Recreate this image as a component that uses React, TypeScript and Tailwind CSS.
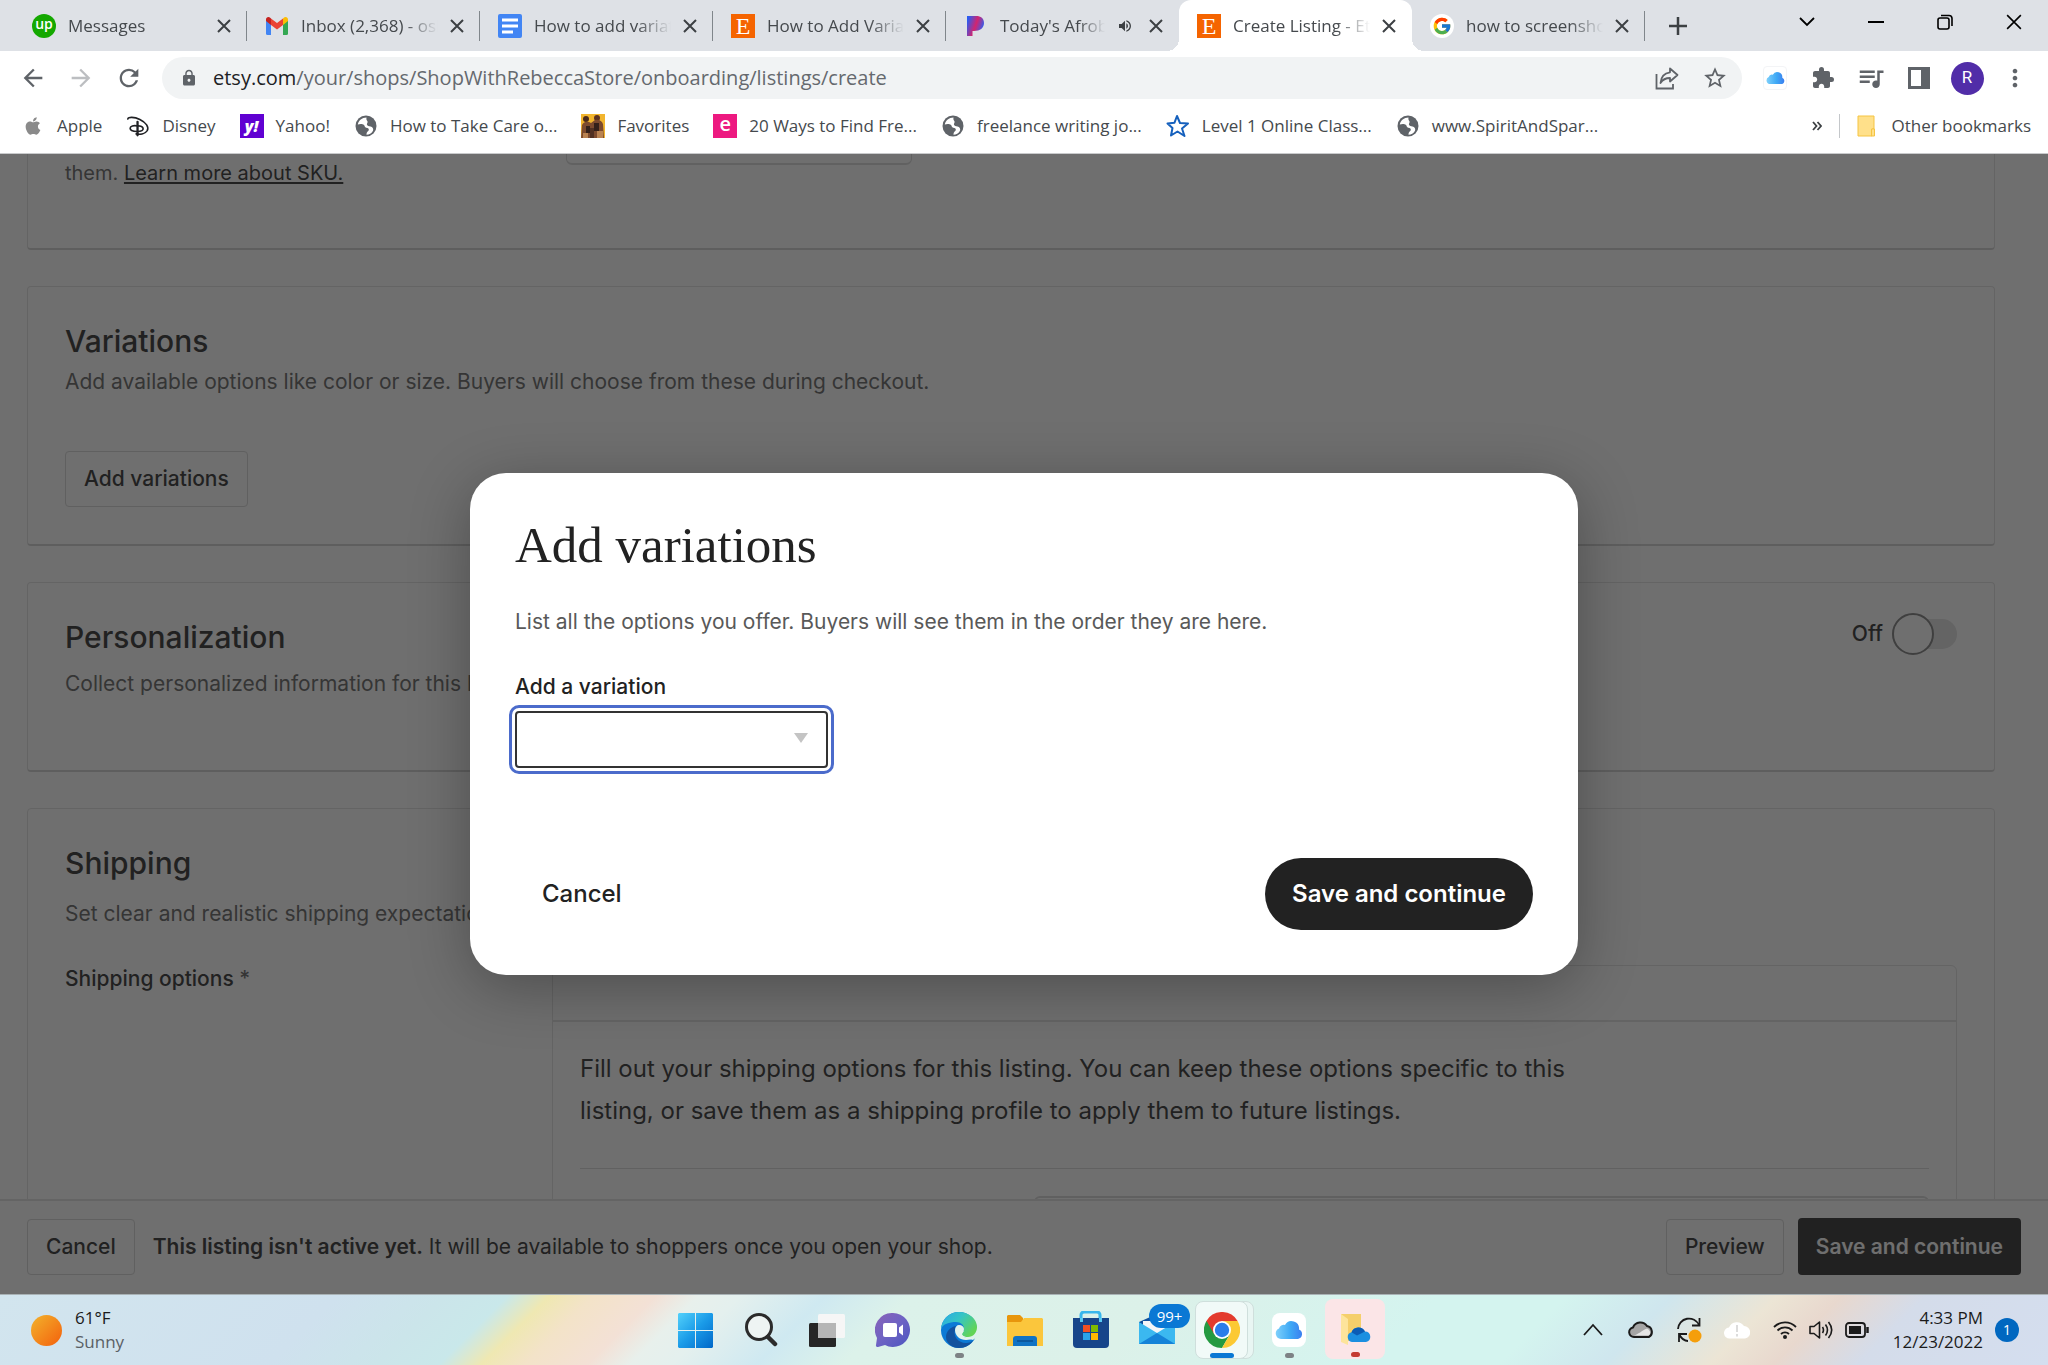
import type { ReactNode } from 'react'
import { FaApple } from 'react-icons/fa'
import { FcGoogle } from 'react-icons/fc'
import {
  MdArrowBack,
  MdArrowForward,
  MdExtension,
  MdLock,
  MdMoreVert,
  MdQueueMusic,
  MdRefresh,
  MdStarBorder,
  MdVolumeUp,
} from 'react-icons/md'

/* ---------- favicons ---------- */

const UpworkIcon = () => (
  <span className="flex size-6 items-center justify-center rounded-full bg-[#14a800] pb-1 text-sm leading-none font-semibold text-white">
    up
  </span>
)

const GmailIcon = () => (
  <svg viewBox="0 0 24 24" className="size-6">
    <path d="M1 6v13.5A1.5 1.5 0 0 0 2.500 21H6V10z" fill="#4285f4" />
    <path d="M23 6v13.5a1.500 1.500 0 0 1-1.500 1.500H18V10z" fill="#34a853" />
    <path d="M18 4.500V11l5-4V5.500C23 3 20.200 2.200 18.500 4z" fill="#fbbc04" />
    <path d="M1 5.500V7l5 4V4.500L5.500 4C3.800 2.200 1 3 1 5.500z" fill="#c5221f" />
    <path d="M6 4.500 12 9l6-4.500V11l-6 4.500L6 11z" fill="#ea4335" />
  </svg>
)

const DocsIcon = () => (
  <svg viewBox="0 0 24 24" className="size-6">
    <rect width="24" height="24" rx="2" fill="#4285f4" />
    <path d="M4 6h16M4 12h16M4 18h11" stroke="#fff" strokeWidth="3" />
  </svg>
)

const EtsyIcon = () => (
  <span className="flex size-6 items-center justify-center bg-[#f56400] font-['Liberation_Serif',serif] text-2xl leading-6 text-white">
    E
  </span>
)

const PandoraIcon = () => (
  <svg viewBox="0 0 24 24" className="size-6">
    <defs>
      <linearGradient id="pandora" x1="0" y1="0" x2="1" y2="0.4">
        <stop offset="0.1" stopColor="#2b5cf0" />
        <stop offset="0.6" stopColor="#d3246e" />
        <stop offset="1" stopColor="#3a5be8" />
      </linearGradient>
    </defs>
    <path d="M3 2h9c5 0 8 2.600 8 7 0 5-4 8-10 8H8.500v5H3z" fill="url(#pandora)" />
  </svg>
)

const GlobeIcon = () => (
  <svg viewBox="0 0 22 22" className="size-[22px]">
    <circle cx="11" cy="11" r="10.500" fill="#5f6368" />
    <path
      d="M11.500 2.500c-4.500 0-8 3-8.700 7 2-.8 4.700-.9 6.200.5 1 1 .6 2.500 2.200 2.700 2 .3 3 1 2.500 2.600-.4 1.200-1.700 1.500-2 2.700-.2.700-.2 1.200-.2 1.700 2.500 0 5.300-1.500 6.500-4 .8-2-.5-3.700-2.500-4.200-1.700-.5-3-.3-3.500-1.700-.4-1.300.8-1.800.6-3C12.400 5.500 11 5.300 11.500 2.500z"
      fill="#fff"
    />
  </svg>
)

const DisneyIcon = () => (
  <svg viewBox="0 0 26 24" className="h-6 w-[26px]" fill="none" stroke="#202124" strokeLinecap="round">
    <path d="M2 4.500C2 2 9 2 15 5c7 3.500 10 8 8 12-2 3-7 4.500-12 3.500" strokeWidth="1.800" />
    <path d="M12.500 7.500V22" strokeWidth="2.500" />
    <path d="M13 12c-5-1-8.500 0-8.500 2.500S8 18 12 18c5 0 7-1.500 6.500-3.500S15 11.500 12 12" strokeWidth="1.800" />
  </svg>
)

const YahooIcon = () => (
  <span className="flex size-6 items-center justify-center bg-[#6001d2] text-base leading-none font-extrabold text-white italic">
    y!
  </span>
)

const FavoritesIcon = () => (
  <svg viewBox="0 0 24 24" className="size-6">
    <rect width="24" height="24" fill="#f2b52e" />
    <circle cx="5" cy="5" r="3" fill="#4a2a1c" />
    <circle cx="16" cy="4" r="3" fill="#5b3222" />
    <path d="M1 11c2-4 6-4 9-2l4-3c4-1 7 1 8 4l1 14H0z" fill="#7c4a2e" />
    <path d="M5 12h4v7H5zM13 9h5v8h-5z" fill="#33201a" />
    <path d="M2 19h5v5H2zM16 17h6v7h-6z" fill="#b98352" />
    <path d="M9 14h4v10H9z" fill="#513022" />
  </svg>
)

const PinkEIcon = () => (
  <span className="flex size-6 items-center justify-center bg-[#ed1980] pb-1 text-xl leading-none font-semibold text-white">
    e
  </span>
)

const BlueStarIcon = () => (
  <svg viewBox="0 0 24 24" className="size-6" fill="none" stroke="#1560bd" strokeWidth="2" strokeLinejoin="round">
    <path d="m11 2 3 7 8 .5-6 5L18.500 22 11.500 17.500 5 21.500 6.500 14 1.500 9.500l7-.8z" />
  </svg>
)

const CloudShape = ({ className, id }: { className: string; id: string }) => (
  <svg viewBox="0 0 28 18" className={className}>
    <defs>
      <linearGradient id={id} x1="0" x2="1">
        <stop offset="0" stopColor="#7ed0fb" />
        <stop offset="0.550" stopColor="#3fa9f5" />
        <stop offset="1" stopColor="#3b7ff0" />
      </linearGradient>
    </defs>
    <path
      d="M6 18a5.500 5.500 0 0 1-2-10.500A5 5 0 0 1 10 4a7.500 7.500 0 0 1 14 4.500A5 5 0 0 1 23 18z"
      fill={`url(#${id})`}
    />
  </svg>
)

const CloseGlyph = ({ size = 'size-3.5', width = 2 }: { size?: string; width?: number }) => (
  <svg viewBox="0 0 14 14" className={size} stroke="currentColor" strokeWidth={width}>
    <path d="m1 1 12 12M13 1 1 13" />
  </svg>
)

/* ---------- browser chrome ---------- */

const tabs: { title: string; icon: ReactNode; active?: boolean; audio?: boolean; line?: boolean }[] = [
  { title: 'Messages', icon: <UpworkIcon />, line: true },
  { title: 'Inbox (2,368) - oshunrebecca', icon: <GmailIcon />, line: true },
  { title: 'How to add variations', icon: <DocsIcon />, line: true },
  { title: 'How to Add Variations', icon: <EtsyIcon />, line: true },
  { title: "Today's Afrobeats", icon: <PandoraIcon />, audio: true },
  { title: 'Create Listing - Etsy', icon: <EtsyIcon />, active: true },
  {
    title: 'how to screenshot',
    icon: (
      <span className="flex size-6 items-center justify-center rounded-full bg-white">
        <FcGoogle className="size-5" />
      </span>
    ),
    line: true,
  },
]

const bookmarks: { title: string; icon: ReactNode }[] = [
  { title: 'Apple', icon: <FaApple className="size-5 text-[#8a8a8a]" /> },
  { title: 'Disney', icon: <DisneyIcon /> },
  { title: 'Yahoo!', icon: <YahooIcon /> },
  { title: 'How to Take Care o...', icon: <GlobeIcon /> },
  { title: 'Favorites', icon: <FavoritesIcon /> },
  { title: '20 Ways to Find Fre...', icon: <PinkEIcon /> },
  { title: 'freelance writing jo...', icon: <GlobeIcon /> },
  { title: 'Level 1 Online Class...', icon: <BlueStarIcon /> },
  { title: 'www.SpiritAndSpar...', icon: <GlobeIcon /> },
]

function TabStrip() {
  return (
    <div className="flex h-[51px] bg-[#dee1e6] pl-[14px]">
      {tabs.map((tab) => (
        <div
          key={tab.title}
          className={
            tab.active
              ? "relative flex w-[233px] items-center rounded-t-xl bg-white pr-4 pl-[18px] before:absolute before:bottom-0 before:-left-3 before:size-3 before:bg-[radial-gradient(circle_at_0_0,transparent_12px,#fff_12px)] before:content-[''] after:absolute after:-right-3 after:bottom-0 after:size-3 after:bg-[radial-gradient(circle_at_100%_0,transparent_12px,#fff_12px)] after:content-['']"
              : 'relative flex w-[233px] items-center pr-4 pl-[18px]'
          }
        >
          <span className="shrink-0">{tab.icon}</span>
          <span className="ml-3 flex-1 overflow-hidden text-[17px] whitespace-nowrap text-[#45494d] [mask-image:linear-gradient(to_right,black_75%,transparent)]">
            {tab.title}
          </span>
          {tab.audio && <MdVolumeUp className="mr-1 ml-3 size-4 shrink-0 text-[#3c4043]" />}
          <button aria-label="Close tab" className="ml-3 shrink-0 text-[#3c4043]">
            <CloseGlyph />
          </button>
          {tab.line && <span className="absolute top-[11px] right-0 h-[30px] w-px bg-[#80868b]" />}
        </div>
      ))}
      <button aria-label="New tab" className="flex w-[66px] items-center justify-center text-[#3c4043]">
        <svg viewBox="0 0 18 18" className="size-[18px]" stroke="currentColor" strokeWidth="2.500">
          <path d="M9 0v18M0 9h18" />
        </svg>
      </button>
      <div className="ml-auto flex h-11 text-black">
        <button aria-label="Search tabs" className="flex w-[69px] items-center justify-center">
          <svg viewBox="0 0 16 16" className="size-4" fill="none" stroke="currentColor" strokeWidth="1.800">
            <path d="m1 4 7 7 7-7" />
          </svg>
        </button>
        <button aria-label="Minimize" className="flex w-[69px] items-center justify-center">
          <span className="h-[2px] w-4 bg-black" />
        </button>
        <button aria-label="Restore" className="flex w-[69px] items-center justify-center">
          <svg viewBox="0 0 16 16" className="size-4" fill="none" stroke="currentColor" strokeWidth="1.600">
            <rect x="1" y="4" width="11" height="11" rx="2" />
            <path d="M4 1.500h8A3 3 0 0 1 15 4.500V12" />
          </svg>
        </button>
        <button aria-label="Close" className="flex w-[69px] items-center justify-center">
          <CloseGlyph size="size-4" width={1.4} />
        </button>
      </div>
    </div>
  )
}

function Toolbar() {
  return (
    <div className="flex h-[54px] items-center gap-[9px] bg-white px-[9px] text-[#5f6368]">
      <div className="flex">
        <button aria-label="Back" className="flex w-12 justify-center">
          <MdArrowBack className="size-7" />
        </button>
        <button aria-label="Forward" className="flex w-12 justify-center text-[#bcbec1]">
          <MdArrowForward className="size-7" />
        </button>
        <button aria-label="Reload" className="flex w-12 justify-center">
          <MdRefresh className="size-7" />
        </button>
      </div>
      <div className="flex h-[42px] flex-1 items-center rounded-full bg-[#f1f3f4] pr-[3px] pl-[18px]">
        <MdLock className="size-[18px]" />
        <span className="ml-[15px] flex-1 text-[20px] whitespace-nowrap text-[#65696e]">
          <span className="text-[#202124]">etsy.com</span>/your/shops/ShopWithRebeccaStore/onboarding/listings/create
        </span>
        <button aria-label="Share" className="flex w-12 justify-center">
          <svg viewBox="0 0 24 24" className="size-6" fill="none" stroke="currentColor" strokeWidth="1.800">
            <path d="M1.500 8v14.500H18V18" />
            <path d="M15 2.500 22.500 9 15 15.500V12c-4 0-7 1-9.500 5C6 11 9.500 7 15 6.300z" strokeLinejoin="round" />
          </svg>
        </button>
        <button aria-label="Bookmark this tab" className="flex w-12 justify-center">
          <MdStarBorder className="size-[26px]" />
        </button>
      </div>
      <div className="flex items-center">
        <button aria-label="iCloud" className="flex w-12 justify-center">
          <span className="flex size-6 items-center justify-center rounded border border-gray-100 bg-white">
            <CloudShape className="w-[19px]" id="cloud-ext" />
          </span>
        </button>
        <button aria-label="Extensions" className="flex w-12 justify-center">
          <MdExtension className="size-6" />
        </button>
        <button aria-label="Media" className="flex w-12 justify-center">
          <MdQueueMusic className="size-[30px]" />
        </button>
        <button aria-label="Side panel" className="flex w-12 justify-center">
          <svg viewBox="0 0 22 22" className="size-[22px]">
            <path d="M0 0h22v22H0zM3 3v16h10V3z" fill="currentColor" fillRule="evenodd" />
          </svg>
        </button>
        <button className="flex w-12 justify-center" aria-label="Profile">
          <span className="flex size-[33px] items-center justify-center rounded-full bg-[#512da8] font-[Roboto,sans-serif] text-[17px] text-white">
            R
          </span>
        </button>
        <button aria-label="Menu" className="flex w-12 justify-center">
          <MdMoreVert className="size-7" />
        </button>
      </div>
    </div>
  )
}

function BookmarksBar() {
  return (
    <div className="flex h-[49px] items-center border-b border-[#c9cacc] bg-white pr-[17px] pb-[7px] pl-[21px] text-[17px] text-[#45494d]">
      <div className="flex gap-6">
        {bookmarks.map((item) => (
          <a key={item.title} href="#" className="flex items-center gap-3 whitespace-nowrap">
            <span className="flex w-6 justify-center">{item.icon}</span>
            {item.title}
          </a>
        ))}
      </div>
      <button aria-label="More bookmarks" className="ml-auto text-[#3c4043]">
        <svg viewBox="0 0 10 10" className="size-[10px]" fill="none" stroke="currentColor" strokeWidth="1.800">
          <path d="m1 1 3.500 4L1 9M5.500 1 9 5 5.500 9" />
        </svg>
      </button>
      <span className="mx-[17px] h-6 w-px bg-[#c4c7ca]" />
      <a href="#" className="flex items-center gap-4 whitespace-nowrap">
        <svg viewBox="0 0 18 22" className="h-[22px] w-[18px]">
          <path d="M1 1h16v13h-2v7H1z" fill="#ffe08a" stroke="#f5c443" />
          <path d="M14.500 14h3v7h-3z" fill="#ffe08a" stroke="#f5c443" />
        </svg>
        Other bookmarks
      </a>
    </div>
  )
}

/* ---------- listing form ---------- */

function ListingForm() {
  return (
    <div className="min-h-0 flex-1 overflow-hidden pr-[53px] pl-[27px]">
      <section className="h-[96px] rounded-b border border-t-0 border-b-2 border-[#dfdfdf] border-b-[#cfcfcf] px-[37px]">
        <div className="flex">
          <p className="-mt-[26px] w-[501px] text-[20px] leading-[30px] text-[#595959]">
            SKUs are for your use only—buyers won't see
            <br />
            them.{' '}
            <a href="#" className="text-[#222] underline underline-offset-2">
              Learn more about SKU.
            </a>
          </p>
          <input
            aria-label="SKU"
            className="-mt-12 h-[59px] w-[346px] rounded-md border border-b-2 border-[#d8d8d8]"
          />
        </div>
      </section>

      <section className="mt-[36px] rounded border border-b-2 border-[#dfdfdf] border-b-[#cfcfcf] px-[37px] pt-[36px] pb-[37px]">
        <h2 className="text-[30px] leading-9 font-medium text-[#222]">Variations</h2>
        <p className="mt-2 text-[21px] leading-[30px] text-[#595959]">
          Add available options like color or size. Buyers will choose from these during checkout.
        </p>
        <button className="mt-[54px] h-14 rounded border border-[#d4d4d4] px-[18px] text-[21px] font-medium text-[#222]">
          Add variations
        </button>
      </section>

      <section className="mt-[36px] flex justify-between rounded border border-b-2 border-[#dfdfdf] border-b-[#cfcfcf] px-[37px] pt-[36px] pb-[71px]">
        <div>
          <h2 className="text-[30px] leading-9 font-medium text-[#222]">Personalization</h2>
          <p className="mt-[14px] text-[21px] leading-[30px] text-[#595959]">
            Collect personalized information for this listing.
          </p>
        </div>
        <label className="-mt-[6px] flex h-[42px] items-center text-[21px] font-medium text-[#222]">
          Off
          <input type="checkbox" role="switch" className="sr-only" />
          <span className="ml-[9px] flex h-[30px] w-[65px] items-center rounded-full bg-[#dedede]">
            <span className="size-[42px] rounded-full border-2 border-[#777] bg-white" />
          </span>
        </label>
      </section>

      <section className="mt-[36px] rounded border border-[#dfdfdf] px-[37px] pt-[36px]">
        <h2 className="text-[30px] leading-9 font-medium text-[#222]">Shipping</h2>
        <p className="mt-[18px] text-[21px] leading-[30px] text-[#595959]">
          Set clear and realistic shipping expectations for shoppers.
        </p>
        <div className="mt-9 flex">
          <h3 className="w-[487px] shrink-0 text-[21px] leading-[27px] font-medium text-[#222]">
            Shipping options <span className="text-[#595959]">*</span>
          </h3>
          <div className="flex-1 rounded-md border border-[#dfdfdf]">
            <div className="h-14 border-b-2 border-[#dfdfdf]" />
            <div className="px-[27px] pt-[26px]">
              <p className="max-w-[1040px] text-[24px] leading-[42px] text-[#222]">
                Fill out your shipping options for this listing. You can keep these options specific to this
                <br />
                listing, or save them as a shipping profile to apply them to future listings.
              </p>
              <hr className="mt-[36px] border-[#d8d8d8]" />
              <div className="mt-[27px] flex justify-end">
                <input
                  aria-label="Shipping origin"
                  className="h-14 w-[895px] rounded-md border-2 border-[#d4d4d4]"
                />
              </div>
            </div>
          </div>
        </div>
      </section>
    </div>
  )
}

function ActionBar() {
  return (
    <div className="flex h-[95px] items-center border-t-2 border-[#dfdfdf] bg-white px-[27px] pb-[2px] text-[21px] text-[#222]">
      <button className="h-14 rounded border border-[#d4d4d4] px-[18px] font-medium">Cancel</button>
      <p className="ml-[18px]">
        <b className="font-semibold">This listing isn't active yet.</b> It will be available to shoppers once you open
        your shop.
      </p>
      <button className="ml-auto h-14 rounded border border-[#d4d4d4] px-[18px] font-medium">Preview</button>
      <button className="ml-[14px] h-[57px] rounded bg-[#222] px-[18px] font-semibold text-white">
        Save and continue
      </button>
    </div>
  )
}

function VariationsDialog() {
  return (
    <div
      role="dialog"
      aria-labelledby="dialog-title"
      className="w-[1108px] max-w-full rounded-[36px] bg-white px-[45px] pt-[42px] pb-[45px] shadow-[0_12px_60px_rgba(0,0,0,0.3)]"
    >
      <h1 id="dialog-title" className="font-['Liberation_Serif',serif] text-[51px] leading-[60px] text-[#222]">
        Add variations
      </h1>
      <p className="mt-[32px] text-[21px] leading-[30px] text-[#595959]">
        List all the options you offer. Buyers will see them in the order they are here.
      </p>
      <label htmlFor="variation" className="mt-[35px] block text-[21px] leading-[30px] font-medium text-[#222]">
        Add a variation
      </label>
      <div className="relative mt-[9px] w-[313px]">
        <select
          id="variation"
          className="block h-[57px] w-full appearance-none rounded border-2 border-[#333] bg-white outline-3 outline-offset-3 outline-[#4b6bcb]"
        />
        <svg viewBox="0 0 14 10" className="pointer-events-none absolute top-[22px] right-[20px] h-[10px] w-[14px]">
          <path d="M0 0h14L7 10z" fill="#c4c4c4" />
        </svg>
      </div>
      <div className="mt-[90px] flex items-center justify-between">
        <button className="px-[27px] text-[24px] font-medium text-[#222]">Cancel</button>
        <button className="h-[72px] rounded-full bg-[#222] px-[27px] text-[24px] font-semibold text-white">
          Save and continue
        </button>
      </div>
    </div>
  )
}

/* ---------- taskbar ---------- */

const WindowsIcon = () => (
  <svg viewBox="0 0 35 35" className="size-[35px]">
    <defs>
      <linearGradient id="win" x1="0" y1="0" x2="1" y2="1">
        <stop offset="0" stopColor="#53d1fb" />
        <stop offset="0.500" stopColor="#1a9be8" />
        <stop offset="1" stopColor="#0067c8" />
      </linearGradient>
    </defs>
    <path
      d="M1 0h16v17H0V1zM18 0h16l1 1v16H18zM0 18h17v17H1l-1-1zM18 18h17v16l-1 1H18z"
      fill="url(#win)"
    />
  </svg>
)

const SearchIcon = () => (
  <svg viewBox="0 0 34 34" className="size-[34px]" fill="none" stroke="#2b2b2b">
    <circle cx="15" cy="14" r="12.500" strokeWidth="3" fill="#eef4f3" />
    <path d="m24 24 7 7" strokeWidth="4.500" strokeLinecap="round" />
  </svg>
)

const TaskViewIcon = () => (
  <svg viewBox="0 0 36 34" className="h-[34px] w-9">
    <rect y="10" width="27" height="24" rx="1.500" fill="#262626" />
    <rect x="9" y="1" width="27" height="24" rx="1.500" fill="#f6f6f6" />
    <path d="M9 10h18v15H9z" fill="#b5b5b5" />
  </svg>
)

const ChatIcon = () => (
  <svg viewBox="0 0 36 36" className="size-9">
    <defs>
      <linearGradient id="chat" x1="0" y1="0" x2="1" y2="1">
        <stop offset="0" stopColor="#8a62b8" />
        <stop offset="0.500" stopColor="#6d63c4" />
        <stop offset="1" stopColor="#4d55c0" />
      </linearGradient>
    </defs>
    <path d="M18 1a17 17 0 1 1-8 32l-7 2c-1.500.3-2.300-.4-2-2l1-7A17 17 0 0 1 18 1z" fill="url(#chat)" />
    <rect x="8" y="11" width="14" height="14" rx="2" fill="#fff" />
    <path d="m24 15.500 4-3v11l-4-3z" fill="#fff" />
  </svg>
)

const EdgeIcon = () => (
  <svg viewBox="0 0 36 36" className="size-9">
    <defs>
      <linearGradient id="edge-top" x1="0" y1="0" x2="1" y2="0.600">
        <stop offset="0" stopColor="#2aa8e8" />
        <stop offset="0.500" stopColor="#35c5c4" />
        <stop offset="1" stopColor="#62d455" />
      </linearGradient>
    </defs>
    <circle cx="18" cy="18" r="18" fill="#0c7ad6" />
    {/* opening of the wave */}
    <path d="M18 20 36 16v9l-4 3-14-4z" fill="#dcf2ea" />
    <path
      d="M0 17C1 7 8 0 18 0s18 7 18 15c0 6-4 10-9 10-4 0-6-2-6-3 0-1 2-2 2-5 0-4-3-7-8-7C8 10 2 12 0 17z"
      fill="url(#edge-top)"
    />
    <path d="M14 18c-2 6 3 13 11 13 3 0 6-1 8-4-3 6-9 9-15 9-7 0-13-5-13-11 0-5 4-10 10-11-1 1-1 3-1 4z" fill="#13529e" />
    <path d="M14 18c0-3 2-5 4-5 3 0 5 2 5 4 0 3-2 4-2 5 0 2 3 4 6 4h6c-2 1-5 2-8 2-6 0-11-4-11-10z" fill="#e3f3ec" />
  </svg>
)

const ExplorerIcon = () => (
  <svg viewBox="0 0 36 34" className="h-[34px] w-9">
    <path d="M1 2h12l3 3v6H0V3z" fill="#e8960c" />
    <path d="M0 9h14l3-4h18l1 1v27H0z" fill="#fbc63c" />
    <path d="M6 33V26a3 3 0 0 1 3-3h18a3 3 0 0 1 3 3v7z" fill="#1073c4" />
    <path d="M10 28h16" stroke="#0a4f92" strokeWidth="1.500" />
  </svg>
)

const StoreIcon = () => (
  <svg viewBox="0 0 36 38" className="h-[38px] w-9">
    <path d="M8 12V4a3 3 0 0 1 3-3h13a3 3 0 0 1 3 3v8" fill="none" stroke="#38b6ec" strokeWidth="3" />
    <path d="M0 7h36v26a4 4 0 0 1-4 4H4a4 4 0 0 1-4-4z" fill="#17458a" />
    <path d="M7 7h3v4H7zM26 7h3v4h-3z" fill="#57c8f2" />
    <path d="M10 14h7v7h-7z" fill="#f25022" />
    <path d="M18 14h7v7h-7z" fill="#7fba00" />
    <path d="M10 22h7v7h-7z" fill="#2aa3e8" />
    <path d="M18 22h7v7h-7z" fill="#ffb900" />
  </svg>
)

const MailIcon = () => (
  <svg viewBox="0 0 36 32" className="h-8 w-9">
    <path d="M0 8 18 0l18 8v8H0z" fill="#0f4f9c" />
    <path d="M4 7h28v12H4z" fill="#f4f6f8" />
    <path d="m0 8 18 11L36 8v22H0z" fill="#3bb8f0" />
    <path d="M0 30 18 19l18 11H0z" fill="#1583d8" />
  </svg>
)

const ChromeIcon = () => (
  <svg viewBox="0 0 36 36" className="size-9">
    <path d="M18 18 2.400 9A18 18 0 0 1 33.600 9z" fill="#e33b2e" />
    <path d="M2.400 9A18 18 0 0 0 18 36l7.800-13.500L18 18z" fill="#249a41" />
    <path d="M25.800 22.500 18 36A18 18 0 0 0 33.600 9H18z" fill="#fcc934" />
    <path d="M2.400 9 10.200 22.500 18 9z" fill="#e33b2e" />
    <path d="M2.400 9 10.200 22.500l-2 4z" fill="#249a41" />
    <circle cx="18" cy="18" r="9" fill="#fff" />
    <circle cx="18" cy="18" r="7.200" fill="#2b7de9" />
  </svg>
)

const OneDriveFolderIcon = () => (
  <svg viewBox="0 0 32 34" className="h-[34px] w-8">
    <path d="M2 2h20v27H8z" fill="#f5cf6b" />
    <path d="m2 2 7 5v26l-7-3z" fill="#fde49b" />
    <path d="M13 30a5 5 0 0 1-.5-9.800A7.500 7.500 0 0 1 26 19.500 5.300 5.300 0 0 1 27 30z" fill="#1b8fe0" />
    <path d="M12.500 20.200A7.500 7.500 0 0 1 26 19.500l-8 4z" fill="#0b5cb5" />
  </svg>
)

function TaskItem({ label, dot, children }: { label: string; dot?: string; children: ReactNode }) {
  return (
    <button aria-label={label} className="relative flex h-full w-[66px] items-center justify-center">
      {children}
      {dot && <span className={`absolute bottom-[7px] h-[5px] w-[9px] rounded-full ${dot}`} />}
    </button>
  )
}

function Taskbar() {
  return (
    <footer className="grid h-[71px] grid-cols-[1fr_auto_1fr] border-t border-[#a9b2b5] bg-[linear-gradient(135deg,#d2e5ee_0%,#cfe1ee_16%,#cbe5ea_21%,#c9e8ea_24%,#efe8b2_26%,#f3e3c8_28%,#f3e1d6_31%,#e8f0ec_33%,#e4f0ee_35%,#cfe9f1_39%,#dcf2ea_43%,#dcf1e9_55%,#d4f4ef_68%,#d4f4ef_74%,#cfe6ee_79%,#ece5d5_84%,#e8d8ce_87%,#d4dcea_91%,#d4deef_100%)] text-[17px] leading-6 text-[#1b1b1b]">
      <button className="flex items-center gap-[13px] pl-[31px] text-left">
        <span className="size-[31px] rounded-full bg-[linear-gradient(135deg,#f2b32c,#f4600c)]" />
        <span>
          61°F
          <br />
          <span className="text-[#5a6065]">Sunny</span>
        </span>
      </button>

      <div className="flex h-full pl-[2px]">
        <TaskItem label="Start">
          <WindowsIcon />
        </TaskItem>
        <TaskItem label="Search">
          <SearchIcon />
        </TaskItem>
        <TaskItem label="Task view">
          <TaskViewIcon />
        </TaskItem>
        <TaskItem label="Chat">
          <ChatIcon />
        </TaskItem>
        <TaskItem label="Edge" dot="bg-[#7d8285]">
          <EdgeIcon />
        </TaskItem>
        <TaskItem label="File Explorer">
          <ExplorerIcon />
        </TaskItem>
        <TaskItem label="Microsoft Store">
          <StoreIcon />
        </TaskItem>
        <TaskItem label="Mail">
          <MailIcon />
          <span className="absolute top-[9px] right-0 flex h-6 w-[41px] items-center justify-center rounded-full bg-[#0a78d4] text-[15px] text-white">
            99+
          </span>
        </TaskItem>
        <TaskItem label="Chrome">
          <span className="absolute top-[6px] right-[2px] h-[58px] w-12 rounded-lg border border-[#cfdfdc] bg-[#e9f6f3]" />
          <span className="absolute top-[6px] left-[5px] flex h-[58px] w-[53px] items-center justify-center rounded-lg border border-[#cfdfdc] bg-[#f1faf8]">
            <ChromeIcon />
            <span className="absolute bottom-0 h-[5px] w-6 rounded-full bg-[#0a78d4]" />
          </span>
        </TaskItem>
        <TaskItem label="iCloud" dot="bg-[#7d8285]">
          <span className="flex size-[34px] items-center justify-center rounded-lg bg-white">
            <CloudShape className="w-7" id="cloud-task" />
          </span>
        </TaskItem>
        <button
          aria-label="OneDrive"
          className="relative mx-[3px] mt-1 flex h-[60px] w-[60px] items-center justify-center rounded-lg bg-[#fbe5e7]"
        >
          <OneDriveFolderIcon />
          <span className="absolute bottom-[2px] h-[5px] w-[9px] rounded-full bg-[#c43a31]" />
        </button>
      </div>

      <div className="flex items-center justify-end pr-[29px]">
        <button aria-label="Show hidden icons" className="flex w-12 justify-center">
          <svg viewBox="0 0 20 14" className="h-[14px] w-5" fill="none" stroke="currentColor" strokeWidth="1.800">
            <path d="m1 12 9-10 9 10" />
          </svg>
        </button>
        <button aria-label="OneDrive status" className="flex w-12 justify-center">
          <svg viewBox="0 0 26 18" className="h-[18px] w-[26px]" strokeWidth="2">
            <path
              d="M6 16a4.800 4.800 0 0 1-1-9.500A8 8 0 0 1 19 5a6 6 0 0 1 2 11z"
              fill="#a5a5a5"
              stroke="#1b1b1b"
            />
            <path d="M6 14.500c4-1 8-5 13-7 3 1 5 6 1 7z" fill="#e6e6e6" />
          </svg>
        </button>
        <button aria-label="Updates" className="flex w-12 justify-center">
          <svg viewBox="0 0 26 26" className="size-[26px]" fill="none" stroke="#1b1b1b" strokeWidth="1.800">
            <path d="M2 12a11 11 0 0 1 21-4M23.500 1v7.500H16" />
            <path d="M3 25v-8h8M3 17c2 4 5 7 9 7" />
            <circle cx="19" cy="19" r="6.500" fill="#f59e0b" stroke="none" />
          </svg>
        </button>
        <button aria-label="Cloud warning" className="flex w-12 justify-center">
          <svg viewBox="0 0 26 18" className="h-[18px] w-[26px]">
            <path d="M6 17.500A5.500 5.500 0 0 1 5 6.500 8.500 8.500 0 0 1 20 5a6.300 6.300 0 0 1 1 12.500z" fill="#fff" />
            <path d="M13 4v7M13 13v2.500" stroke="#dcdcdc" strokeWidth="2" />
          </svg>
        </button>
        <button aria-label="Network, volume and battery" className="flex items-center gap-3 px-3">
          <svg viewBox="0 0 24 20" className="h-5 w-6" fill="none" stroke="#1b1b1b" strokeWidth="1.800">
            <path d="M1 7a15.500 15.500 0 0 1 22 0M4.500 10.500a10.600 10.600 0 0 1 15 0M8 14a5.700 5.700 0 0 1 8 0" />
            <circle cx="12" cy="17" r="2" fill="#1b1b1b" stroke="none" />
          </svg>
          <svg viewBox="0 0 24 22" className="h-[22px] w-6" fill="none" stroke="#1b1b1b" strokeWidth="1.600">
            <path d="M1 7.500h4L10.500 3v16L5 14.500H1z" strokeLinejoin="round" />
            <path d="M13.500 8c1.300 2 1.300 4 0 6M16.500 5.500c2.500 3.500 2.500 7.500 0 11M19.500 3c4 5 4 11 0 16" />
          </svg>
          <svg viewBox="0 0 24 16" className="h-4 w-6" fill="none" stroke="#1b1b1b" strokeWidth="1.800">
            <rect x="1" y="1" width="19" height="14" rx="3" />
            <path d="M4 4h12v8H4z" fill="#1b1b1b" stroke="none" />
            <path d="M22.500 5v6" strokeWidth="2.500" />
          </svg>
        </button>
        <button className="ml-3 text-right">
          4:33 PM
          <br />
          12/23/2022
        </button>
        <span className="ml-3 flex size-6 items-center justify-center rounded-full bg-[#0067c0] text-[14px] text-white">
          1
        </span>
      </div>
    </footer>
  )
}

export default function App() {
  return (
    <div className="flex h-screen flex-col overflow-hidden font-['Open_Sans','Noto_Sans',sans-serif]">
      <header>
        <TabStrip />
        <Toolbar />
        <BookmarksBar />
      </header>

      <main className="relative flex min-h-0 flex-1 flex-col bg-white font-[Inter,sans-serif]">
        <ListingForm />
        <ActionBar />
        {/* Backdrop and dialog */}
        <div className="absolute inset-0 flex items-center justify-center bg-[#222]/65">
          <VariationsDialog />
        </div>
      </main>

      <Taskbar />
    </div>
  )
}
